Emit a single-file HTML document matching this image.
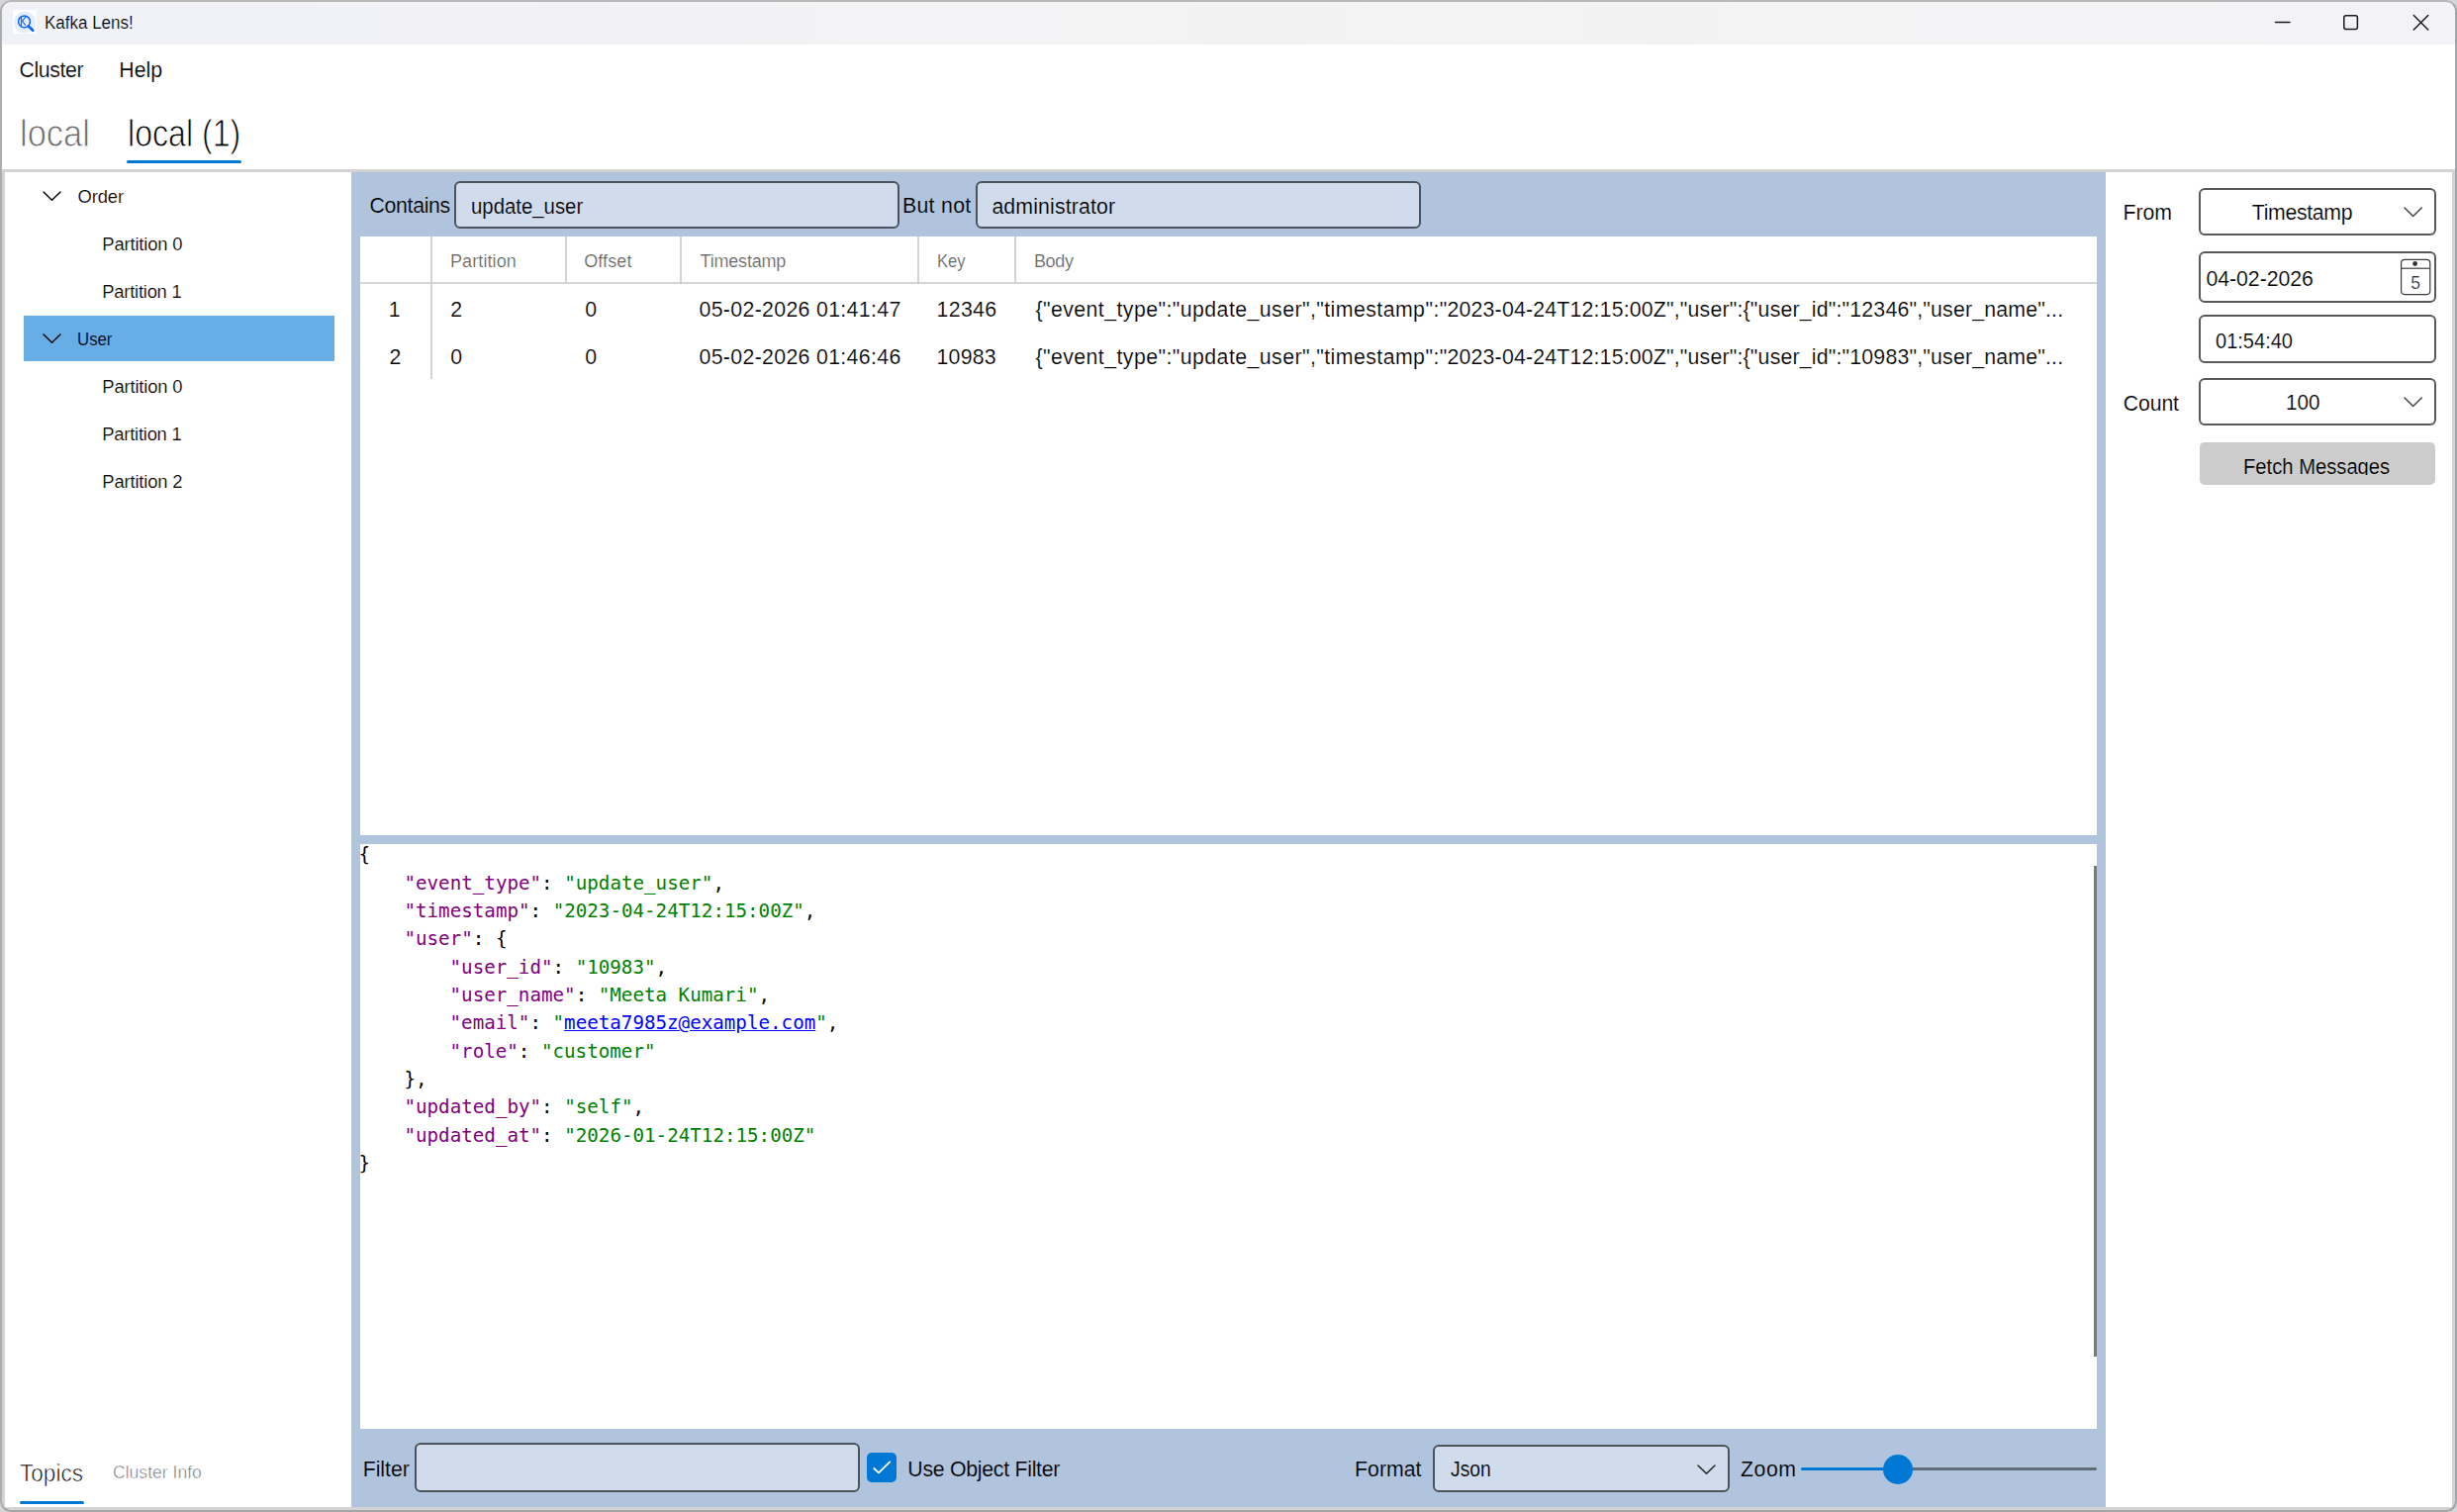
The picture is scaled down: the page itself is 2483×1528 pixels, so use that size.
<!DOCTYPE html>
<html lang="en"><head><meta charset="utf-8"><title>Kafka Lens!</title>
<style>
html,body{margin:0;padding:0}
body{width:2483px;height:1528px;overflow:hidden;background:#d4d5d8;position:relative;font-family:"Liberation Sans", sans-serif;}
#clip{position:absolute;left:0;top:0;width:2483px;height:1528px;overflow:hidden;border-radius:11px;background:#fff}
#frame{position:absolute;left:0;top:0;width:2483px;height:1528px;box-sizing:border-box;border:2px solid #a4a5a7;border-top-color:#b9b9b9;border-left-color:#adadad;border-radius:11px;pointer-events:none}
.ab{position:absolute;box-sizing:border-box}
.t{position:absolute;white-space:pre;line-height:1;font-family:"Liberation Sans", sans-serif;color:#000;-webkit-text-stroke:.18px #fff}
#titlebar{left:2px;top:2px;width:2479px;height:43px;background:linear-gradient(90deg,#f0f2f8 0%,#f3f2f5 35%,#f3f3f3 58%,#f3f2f6 100%)}
#tabcontent{left:2px;top:171px;width:2479px;height:1355px;border:3px solid #d3d3d3;background:#fff}
#blue{left:355px;top:174px;width:1773px;height:1349px;background:#b0c4de}
.inp{border:2px solid #4d535b;border-radius:6px;background:#d0dcec}
.inpw{border:2px solid #5a5a5a;border-radius:6px;background:#fff}
.white{background:#fff}
.vl{background:#d4d4d4;width:2px}
.jl{position:absolute;white-space:pre;line-height:1;font-family:"DejaVu Sans Mono", "Liberation Mono", monospace;font-size:19.2px;color:#000}
.k{color:#800080} .v{color:#008000} .a{color:#0000ff;text-decoration:underline}
</style></head>
<body>
<div id="clip">
<header id="titlebar" class="ab"></header>
<svg class="ab" style="left:13px;top:10px" width="24" height="24" viewBox="0 0 24 24">
<rect width="24" height="24" fill="#fff"/><circle cx="12.1" cy="12.5" r="11" fill="#e4eeff"/>
<circle cx="11.5" cy="11.8" r="5.9" fill="none" stroke="#0a64ff" stroke-width="1.5"/>
<path d="M15.6 16.3 L20.3 20.8" stroke="#0a64ff" stroke-width="2.6" stroke-linecap="round"/>
<path d="M8.5 7.3 V16 M13.3 6.5 L9.5 11.3 L12.8 15.6" fill="none" stroke="#0a64ff" stroke-width="1.1"/>
</svg>
<span class="t" style="left:45.16px;top:14.00px;font-size:18.0px;-webkit-text-stroke:0.18px #f1f2f7;transform:scaleX(0.9435);transform-origin:0 0;">Kafka Lens!</span>
<svg class="ab" style="left:2290px;top:8px" width="180" height="30" viewBox="2290 8 180 30" fill="none" stroke="#1b1b1b" stroke-width="1.5" stroke-linecap="round">
<path d="M2299.5 22.4 H2314"/>
<rect x="2368.8" y="15.8" width="13.6" height="13.6" rx="2"/>
<path d="M2439.3 15.5 L2453.8 30 M2453.8 15.5 L2439.3 30"/>
</svg>
<nav><span class="t" style="left:19.50px;top:61.00px;font-size:21.3px;letter-spacing:-0.383px;">Cluster</span>
<span class="t" style="left:120.30px;top:61.00px;font-size:21.3px;">Help</span></nav>
<div><span class="t l36" style="left:20.07px;top:116.00px;font-size:38px;color:#6a6a6a;-webkit-text-stroke:0.9px #fff;transform:scaleX(0.9083);transform-origin:0 0;">local</span>
<span class="t l36" style="left:128.76px;top:116.00px;font-size:38px;-webkit-text-stroke:0.9px #fff;transform:scaleX(0.8454);transform-origin:0 0;">local (1)</span></div>
<div class="ab " style="left:128px;top:162px;width:116px;height:3px;background:#0078d4;border-radius:1.5px"></div>
<main id="tabcontent" class="ab"></main>
<!-- sidebar -->
<div class="ab " style="left:24px;top:319px;width:314px;height:46px;background:#66aee5"></div>
<svg class="ab" style="left:41.5px;top:191.5px" width="21.0" height="12.3" viewBox="41.5 191.5 21.0 12.3"><polyline points="43.5,193.5 52.0,201.8 60.5,193.5" fill="none" stroke="#000" stroke-width="1.4" stroke-linecap="round" stroke-linejoin="round"/></svg>
<svg class="ab" style="left:41.5px;top:335.5px" width="21.0" height="12.3" viewBox="41.5 335.5 21.0 12.3"><polyline points="43.5,337.5 52.0,345.8 60.5,337.5" fill="none" stroke="#000" stroke-width="1.4" stroke-linecap="round" stroke-linejoin="round"/></svg>
<div><span class="t" style="left:78.50px;top:190.00px;font-size:18.4px;letter-spacing:-0.125px;">Order</span>
<span class="t" style="left:103.30px;top:238.00px;font-size:18.4px;letter-spacing:-0.150px;">Partition 0</span>
<span class="t" style="left:103.30px;top:286.00px;font-size:18.4px;letter-spacing:-0.240px;">Partition 1</span>
<span class="t" style="left:78.49px;top:334.00px;font-size:18.4px;-webkit-text-stroke:0.18px #66aee5;transform:scaleX(0.9132);transform-origin:0 0;">User</span>
<span class="t" style="left:103.30px;top:382.00px;font-size:18.4px;letter-spacing:-0.150px;">Partition 0</span>
<span class="t" style="left:103.30px;top:430.00px;font-size:18.4px;letter-spacing:-0.240px;">Partition 1</span>
<span class="t" style="left:103.30px;top:478.00px;font-size:18.4px;letter-spacing:-0.150px;">Partition 2</span></div>
<div><span class="t l24" style="left:19.68px;top:1477.00px;font-size:24.6px;-webkit-text-stroke:0.65px #fff;transform:scaleX(0.9176);transform-origin:0 0;">Topics</span>
<span class="t l18" style="left:114.38px;top:1478.00px;font-size:19px;color:#717171;-webkit-text-stroke:0.5px #fff;transform:scaleX(0.9242);transform-origin:0 0;">Cluster Info</span></div>
<div class="ab " style="left:20px;top:1517px;width:65px;height:3px;background:#0078d4;border-radius:1.5px"></div>
<!-- center -->
<section id="blue" class="ab"></section>
<div class="ab inp" style="left:459px;top:183px;width:450px;height:48px;"></div>
<div class="ab inp" style="left:986px;top:183px;width:450px;height:48px;"></div>
<div><span class="t" style="left:373.50px;top:198.00px;font-size:21.3px;-webkit-text-stroke:0.18px #b0c4de;letter-spacing:-0.329px;">Contains</span>
<span class="t" style="left:476.04px;top:199.00px;font-size:21.3px;-webkit-text-stroke:0.18px #d0dcec;transform:scaleX(0.9556);transform-origin:0 0;">update_user</span>
<span class="t" style="left:912.00px;top:198.00px;font-size:21.3px;-webkit-text-stroke:0.18px #b0c4de;letter-spacing:0.283px;">But not</span>
<span class="t" style="left:1002.40px;top:199.00px;font-size:21.3px;-webkit-text-stroke:0.18px #d0dcec;letter-spacing:0.133px;">administrator</span></div>
<div class="ab white" style="left:364px;top:239px;width:1755px;height:605px;"></div>
<div class="ab " style="left:364px;top:285px;width:1755px;height:2px;background:#d6d6d6"></div>
<div class="ab vl" style="left:435px;top:239px;width:2px;height:144px;"></div>
<div class="ab vl" style="left:571px;top:239px;width:2px;height:48px;"></div>
<div class="ab vl" style="left:687px;top:239px;width:2px;height:48px;"></div>
<div class="ab vl" style="left:927px;top:239px;width:2px;height:48px;"></div>
<div class="ab vl" style="left:1025px;top:239px;width:2px;height:48px;"></div>
<div><span class="t" style="left:455.00px;top:255.00px;font-size:18.0px;color:#666;letter-spacing:0.100px;">Partition</span>
<span class="t" style="left:590.20px;top:255.00px;font-size:18.0px;color:#666;letter-spacing:0.100px;">Offset</span>
<span class="t" style="left:707.50px;top:255.00px;font-size:18.0px;color:#666;letter-spacing:-0.188px;">Timestamp</span>
<span class="t" style="left:946.68px;top:255.00px;font-size:18.0px;color:#666;transform:scaleX(0.9233);transform-origin:0 0;">Key</span>
<span class="t" style="left:1044.90px;top:255.00px;font-size:18.0px;color:#666;letter-spacing:-0.333px;">Body</span></div>
<div><span class="t" style="left:392.65px;top:303.00px;font-size:21.3px;">1</span>
<span class="t" style="left:455.20px;top:303.00px;font-size:21.3px;">2</span>
<span class="t" style="left:591.20px;top:303.00px;font-size:21.3px;">0</span>
<span class="t" style="left:706.50px;top:303.00px;font-size:21.3px;letter-spacing:0.333px;">05-02-2026 01:41:47</span>
<span class="t" style="left:946.40px;top:303.00px;font-size:21.3px;letter-spacing:0.400px;">12346</span>
<span class="t" style="left:1046.40px;top:303.00px;font-size:21.3px;letter-spacing:0.432px;">{"event_type":"update_user","timestamp":"</span>
<span class="t" style="left:1462.50px;top:303.00px;font-size:21.3px;letter-spacing:0.182px;">2023-04-24T12:15:00Z","user":{"user_id":"12346","user_name"...</span>
<span class="t" style="left:393.50px;top:351.00px;font-size:21.3px;">2</span>
<span class="t" style="left:455.20px;top:351.00px;font-size:21.3px;">0</span>
<span class="t" style="left:591.20px;top:351.00px;font-size:21.3px;">0</span>
<span class="t" style="left:706.50px;top:351.00px;font-size:21.3px;letter-spacing:0.333px;">05-02-2026 01:46:46</span>
<span class="t" style="left:946.40px;top:351.00px;font-size:21.3px;letter-spacing:0.275px;">10983</span>
<span class="t" style="left:1046.40px;top:351.00px;font-size:21.3px;letter-spacing:0.432px;">{"event_type":"update_user","timestamp":"</span>
<span class="t" style="left:1462.50px;top:351.00px;font-size:21.3px;letter-spacing:0.182px;">2023-04-24T12:15:00Z","user":{"user_id":"10983","user_name"...</span></div>
<div class="ab white" style="left:364px;top:853px;width:1755px;height:591px;"></div>
<div class="ab " style="left:2116px;top:875px;width:3px;height:496px;background:#7a7a7a"></div>
<pre style="margin:0"><div class="jl" style="left:362.40px;top:854.00px">{</div>
<div class="jl" style="left:408.48px;top:883.00px"><span class="k">"event_type"</span>: <span class="v">"update_user"</span>,</div>
<div class="jl" style="left:408.48px;top:911.00px"><span class="k">"timestamp"</span>: <span class="v">"2023-04-24T12:15:00Z"</span>,</div>
<div class="jl" style="left:408.48px;top:939.00px"><span class="k">"user"</span>: {</div>
<div class="jl" style="left:454.56px;top:968.00px"><span class="k">"user_id"</span>: <span class="v">"10983"</span>,</div>
<div class="jl" style="left:454.56px;top:996.00px"><span class="k">"user_name"</span>: <span class="v">"Meeta Kumari"</span>,</div>
<div class="jl" style="left:454.56px;top:1024.00px"><span class="k">"email"</span>: <span class="v">"</span><span class="a">meeta7985z@example.com</span><span class="v">"</span>,</div>
<div class="jl" style="left:454.56px;top:1053.00px"><span class="k">"role"</span>: <span class="v">"customer"</span></div>
<div class="jl" style="left:408.48px;top:1081.00px">},</div>
<div class="jl" style="left:408.48px;top:1109.00px"><span class="k">"updated_by"</span>: <span class="v">"self"</span>,</div>
<div class="jl" style="left:408.48px;top:1138.00px"><span class="k">"updated_at"</span>: <span class="v">"2026-01-24T12:15:00Z"</span></div>
<div class="jl" style="left:362.40px;top:1166.00px">}</div></pre>
<div class="ab inp" style="left:419px;top:1458px;width:450px;height:50px;"></div>
<div class="ab " style="left:876px;top:1468px;width:30px;height:30px;background:#0078d4;border-radius:5px"></div>
<svg class="ab" style="left:876px;top:1468px" width="30" height="30" viewBox="876 1468 30 30"><polyline points="883.3,1484 888,1488.4 899.2,1477.4" fill="none" stroke="#fff" stroke-width="1.8" stroke-linecap="round" stroke-linejoin="round"/></svg>
<div class="ab inp" style="left:1448px;top:1460px;width:300px;height:48px;"></div>
<svg class="ab" style="left:1714px;top:1478.5px" width="21" height="12.3" viewBox="1714 1478.5 21 12.3"><polyline points="1716,1480.5 1724.5,1488.8 1733,1480.5" fill="none" stroke="#222" stroke-width="1.5" stroke-linecap="round" stroke-linejoin="round"/></svg>
<div class="ab " style="left:1820px;top:1483px;width:98px;height:3px;background:#0078d4;border-radius:1.5px"></div>
<div class="ab " style="left:1918px;top:1483px;width:201px;height:3px;background:#626d7b;border-radius:1.5px"></div>
<div class="ab " style="left:1903px;top:1469.5px;width:30px;height:30.0px;background:#0078d4;border-radius:50%"></div>
<div><span class="t" style="left:366.70px;top:1475.00px;font-size:21.3px;-webkit-text-stroke:0.18px #b0c4de;letter-spacing:-0.040px;">Filter</span>
<span class="t" style="left:917.30px;top:1475.00px;font-size:21.3px;-webkit-text-stroke:0.18px #b0c4de;letter-spacing:-0.281px;">Use Object Filter</span>
<span class="t" style="left:1369.10px;top:1475.00px;font-size:21.3px;-webkit-text-stroke:0.18px #b0c4de;letter-spacing:-0.020px;">Format</span>
<span class="t" style="left:1466.10px;top:1475.00px;font-size:21.3px;-webkit-text-stroke:0.18px #d0dcec;transform:scaleX(0.9068);transform-origin:0 0;">Json</span>
<span class="t" style="left:1759.00px;top:1475.00px;font-size:21.3px;-webkit-text-stroke:0.18px #b0c4de;letter-spacing:0.533px;">Zoom</span></div>
<!-- right -->
<div class="ab inpw" style="left:2222px;top:190px;width:240px;height:48px;"></div>
<svg class="ab" style="left:2427.5px;top:207.5px" width="21.3" height="12.5" viewBox="2427.5 207.5 21.3 12.5"><polyline points="2429.5,209.5 2438.15,218 2446.8,209.5" fill="none" stroke="#444" stroke-width="1.5" stroke-linecap="round" stroke-linejoin="round"/></svg>
<div class="ab inpw" style="left:2222px;top:254px;width:240px;height:52px;"></div>
<div class="ab inpw" style="left:2222px;top:318px;width:240px;height:49px;"></div>
<div class="ab inpw" style="left:2222px;top:382px;width:240px;height:48px;"></div>
<svg class="ab" style="left:2427.5px;top:399.5px" width="21.3" height="12.5" viewBox="2427.5 399.5 21.3 12.5"><polyline points="2429.5,401.5 2438.15,410 2446.8,401.5" fill="none" stroke="#444" stroke-width="1.5" stroke-linecap="round" stroke-linejoin="round"/></svg>
<svg class="ab" style="left:2424px;top:260px" width="36" height="40" viewBox="2424 260 36 40" fill="none" stroke="#3a3a3a" stroke-width="1.2">
<rect x="2426.6" y="262.4" width="29.2" height="35.2" rx="3.5"/><path d="M2426.6 271.2 H2455.8"/><circle cx="2440.6" cy="266.5" r="2.4" fill="#333" stroke="none"/></svg>
<div class="ab " style="left:2223px;top:447px;width:238px;height:43px;background:#cccccc;border-radius:5px"></div>
<div class="ab" style="left:2223px;top:447px;width:238px;height:32.7px;overflow:hidden"><span class="t" id="fm" style="left:44.00px;top:15.00px;font-size:21.3px;-webkit-text-stroke:.18px #ccc;transform:scaleX(0.9484);transform-origin:0 0">Fetch Messages</span></div>
<div><span class="t" style="left:2145.50px;top:205.00px;font-size:21.3px;letter-spacing:-0.067px;">From</span>
<span class="t" style="left:2275.80px;top:205.00px;font-size:21.3px;letter-spacing:-0.350px;">Timestamp</span>
<span class="t" style="left:2229.50px;top:272.00px;font-size:21.3px;letter-spacing:-0.067px;">04-02-2026</span>
<span class="t" style="left:2238.56px;top:335.00px;font-size:21.3px;transform:scaleX(0.9407);transform-origin:0 0;">01:54:40</span>
<span class="t" style="left:2145.70px;top:398.00px;font-size:21.3px;letter-spacing:-0.125px;">Count</span>
<span class="t" style="left:2309.86px;top:397.00px;font-size:21.3px;transform:scaleX(0.9697);transform-origin:0 0;">100</span>
<span class="t" style="left:2436.20px;top:278.00px;font-size:17.6px;color:#333;">5</span></div>
</div>
<div id="frame"></div>
</body></html>
